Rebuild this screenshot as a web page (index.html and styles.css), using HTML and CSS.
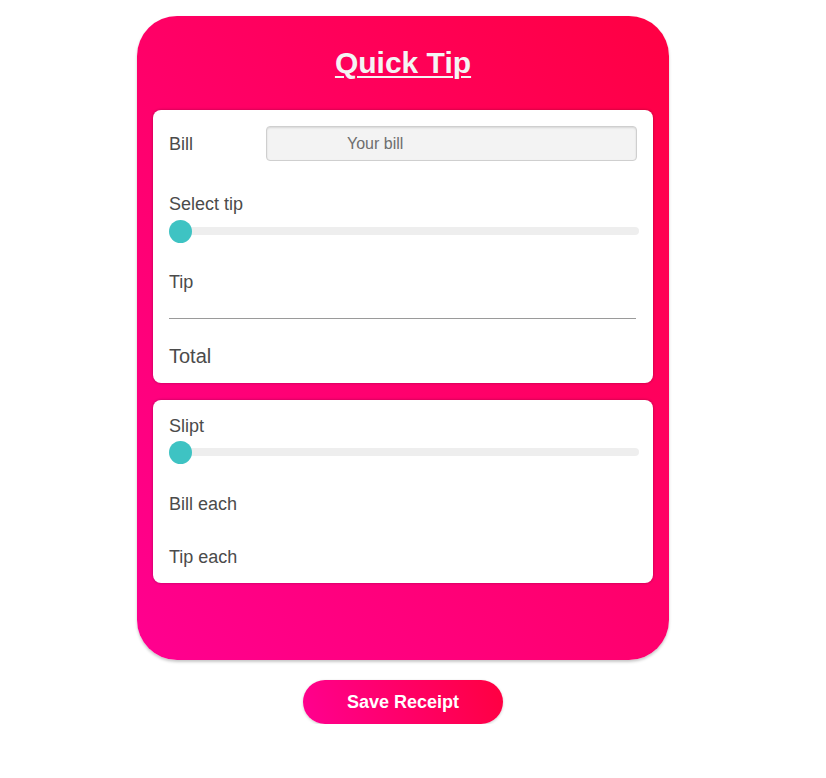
FILE: index.html
```html
<!DOCTYPE html>
<html>
<head>
<meta charset="utf-8">
<link rel="stylesheet" href="styles.css">
</head>
<body>
<div class="wrap">
  <div class="card">
    <h1 class="title">Quick Tip</h1>
    <div class="panel panel-one">
      <div class="bill-row">
        <label class="label bill-label">Bill</label>
        <input class="bill-input" type="text" placeholder="Your bill">
      </div>
      <div class="label select-label">Select tip</div>
      <input class="slider slider-tip" type="range" min="0" max="100" value="0">
      <div class="label tip-label">Tip</div>
      <hr class="divider">
      <div class="label total-label">Total</div>
    </div>
    <div class="panel panel-two">
      <div class="label slipt-label">Slipt</div>
      <input class="slider slider-split" type="range" min="0" max="100" value="0">
      <div class="label each-bill">Bill each</div>
      <div class="label each-tip">Tip each</div>
    </div>
  </div>
  <div class="btn-row">
    <button class="save-btn">Save Receipt</button>
  </div>
</div>
</body>
</html>
```
FILE: styles.css
```css
html, body {
  margin: 0;
  padding: 0;
  background: #ffffff;
  font-family: "Liberation Sans", Arial, sans-serif;
}

.wrap {
  width: 532px;
  margin: 16px 0 0 137px;
}

.card {
  width: 532px;
  box-sizing: border-box;
  border-radius: 40px;
  background: linear-gradient(45deg, #ff0090 0%, #ff006a 50%, #ff0042 100%);
  box-shadow: 0 2px 3px rgba(0, 0, 0, 0.22);
  padding: 29px 16px 77px 16px;
}

.title {
  margin: 0 0 29px 0;
  font-size: 30px;
  line-height: 36px;
  font-weight: bold;
  text-align: center;
  color: #f4f4f4;
  text-decoration: underline;
  text-decoration-thickness: 2px;
  text-underline-offset: 3px;
}

.panel {
  background: #ffffff;
  border-radius: 8px;
  box-shadow: 0 0 3px rgba(0, 0, 0, 0.3);
  display: flex;
  flex-direction: column;
}

.panel-one {
  padding: 16px 16px 15px 16px;
}

.panel-two {
  margin-top: 17px;
  padding: 14px 16px 15px 16px;
}

.label {
  font-size: 18px;
  line-height: 22px;
  color: #4b4b4b;
}

.bill-row {
  display: flex;
  align-items: center;
  height: 35px;
}

.bill-label {
  width: 97px;
  flex: none;
}

.bill-input {
  flex: 1;
  height: 35px;
  box-sizing: border-box;
  border: 1px solid #cfcfcf;
  border-radius: 4px;
  background: #f3f3f3;
  box-shadow: inset 0 1px 2px rgba(0, 0, 0, 0.12);
  padding: 0 0 0 80px;
  font-family: "Liberation Sans", Arial, sans-serif;
  font-size: 16px;
  color: #555;
  outline: none;
}

.bill-input::placeholder {
  color: #6e6e6e;
}

.select-label,
.tip-label,
.slipt-label,
.each-bill,
.each-tip {
  padding-top: 1px;
}

.select-label {
  margin-top: 31px;
}

.slider {
  -webkit-appearance: none;
  appearance: none;
  width: 470px;
  height: 22px;
  margin: 5px 0 0 0;
  padding: 0;
  background: transparent;
  outline: none;
}

.slider::-webkit-slider-runnable-track {
  height: 8px;
  background: #eeeeee;
  border-radius: 4px;
}

.slider::-webkit-slider-thumb {
  -webkit-appearance: none;
  appearance: none;
  width: 23px;
  height: 23px;
  border-radius: 50%;
  background: #3ec3c3;
  border: none;
  margin-top: -7.5px;
}

.slider-split {
  margin-top: 4px;
}

.tip-label {
  margin-top: 28px;
}

.divider {
  width: 467px;
  margin: 25px 0 0 0;
  border: none;
  border-top: 1px solid #9a9a9a;
  height: 0;
}

.total-label {
  margin-top: 25px;
  font-size: 20px;
  line-height: 24px;
}

.each-bill {
  margin-top: 29px;
}

.each-tip {
  margin-top: 30px;
}

.btn-row {
  display: flex;
  justify-content: center;
  margin-top: 20px;
}

.save-btn {
  width: 200px;
  height: 44px;
  border: none;
  border-radius: 22px;
  background: linear-gradient(70deg, #ff0090 0%, #ff0040 100%);
  box-shadow: 0 1px 3px rgba(0, 0, 0, 0.2);
  color: #ffffff;
  font-family: "Liberation Sans", Arial, sans-serif;
  font-size: 18px;
  font-weight: bold;
  cursor: pointer;
}
```
